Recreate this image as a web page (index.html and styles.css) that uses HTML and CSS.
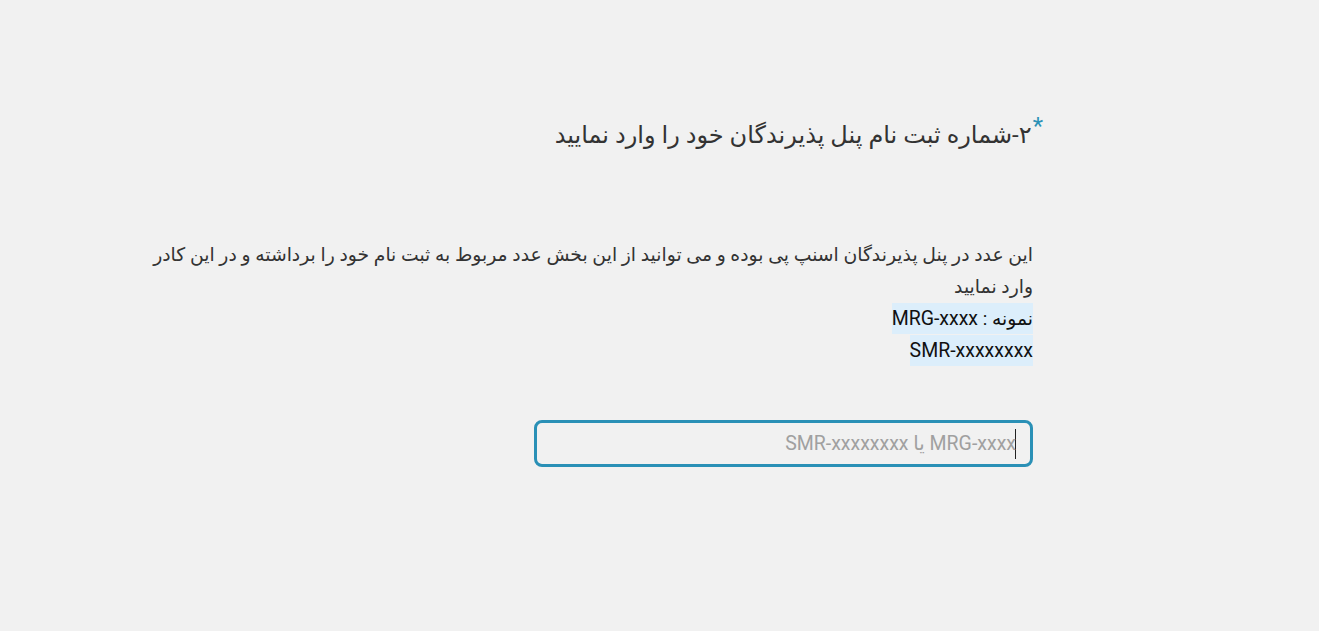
FILE: index.html
```
<!DOCTYPE html>
<html lang="fa" dir="rtl">
<head>
<meta charset="utf-8">
<link rel="stylesheet" href="styles.css">
</head>
<body>
<div class="page">
  <div class="field">
    <h2 class="title"><span class="req">*</span>۲-شماره ثبت نام پنل پذیرندگان خود را وارد نمایید</h2>
    <div class="desc">
      <p class="text">این عدد در پنل پذیرندگان اسنپ پی بوده و می توانید از این بخش عدد مربوط به ثبت نام خود را برداشته و در این کادر وارد نمایید</p>
      <p class="ex"><span class="mark">نمونه : <span class="lat">MRG-xxxx</span></span></p>
      <p class="ex"><span class="mark"><span class="lat">SMR-xxxxxxxx</span></span></p>
    </div>
    <div class="inputwrap">
      <div class="input"><span class="caret"></span><span class="ph">MRG-xxxx یا SMR-xxxxxxxx</span></div>
    </div>
  </div>
</div>
</body>
</html>
```
FILE: styles.css
```
html, body { margin: 0; padding: 0; }
body {
  background: #f1f1f1;
  font-family: Roboto, "DejaVu Sans", sans-serif;
  color: #333;
  width: 1319px;
  height: 631px;
  overflow: hidden;
}
.page {
  display: flex;
  justify-content: flex-start;
  padding-right: 286px;
  padding-top: 104px;
}
.field {
  width: 885px;
}
.title {
  margin: 0;
  font-weight: normal;
  font-size: 24px;
  line-height: 44px;
  color: #333;
  margin-right: -10px;
}
.req {
  color: #2b91b6;
  font-size: 24px;
  vertical-align: 9px;
  margin-left: 1px;
}
.desc {
  margin-top: 82px;
  font-size: 18.8px;
  line-height: 32px;
}
.desc p { margin: 0; }
.mark {
  background: #dceefb;
  padding: 5px 0 4px;
  color: #111;
}
.lat { font-size: 19.5px; }
.inputwrap {
  margin-top: 53px;
  display: flex;
}
.input {
  height: 41px;
  border: 3px solid #2a90b6;
  border-radius: 8px;
  display: flex;
  align-items: center;
  padding: 0 14px 0 0;
  box-sizing: content-box;
  width: 479px;
}
.ph {
  color: #a0a0a0;
  font-size: 19.5px;
}
.caret {
  display: inline-block;
  width: 1px;
  height: 30px;
  background: #222;
  margin-left: -1px;
}
```
